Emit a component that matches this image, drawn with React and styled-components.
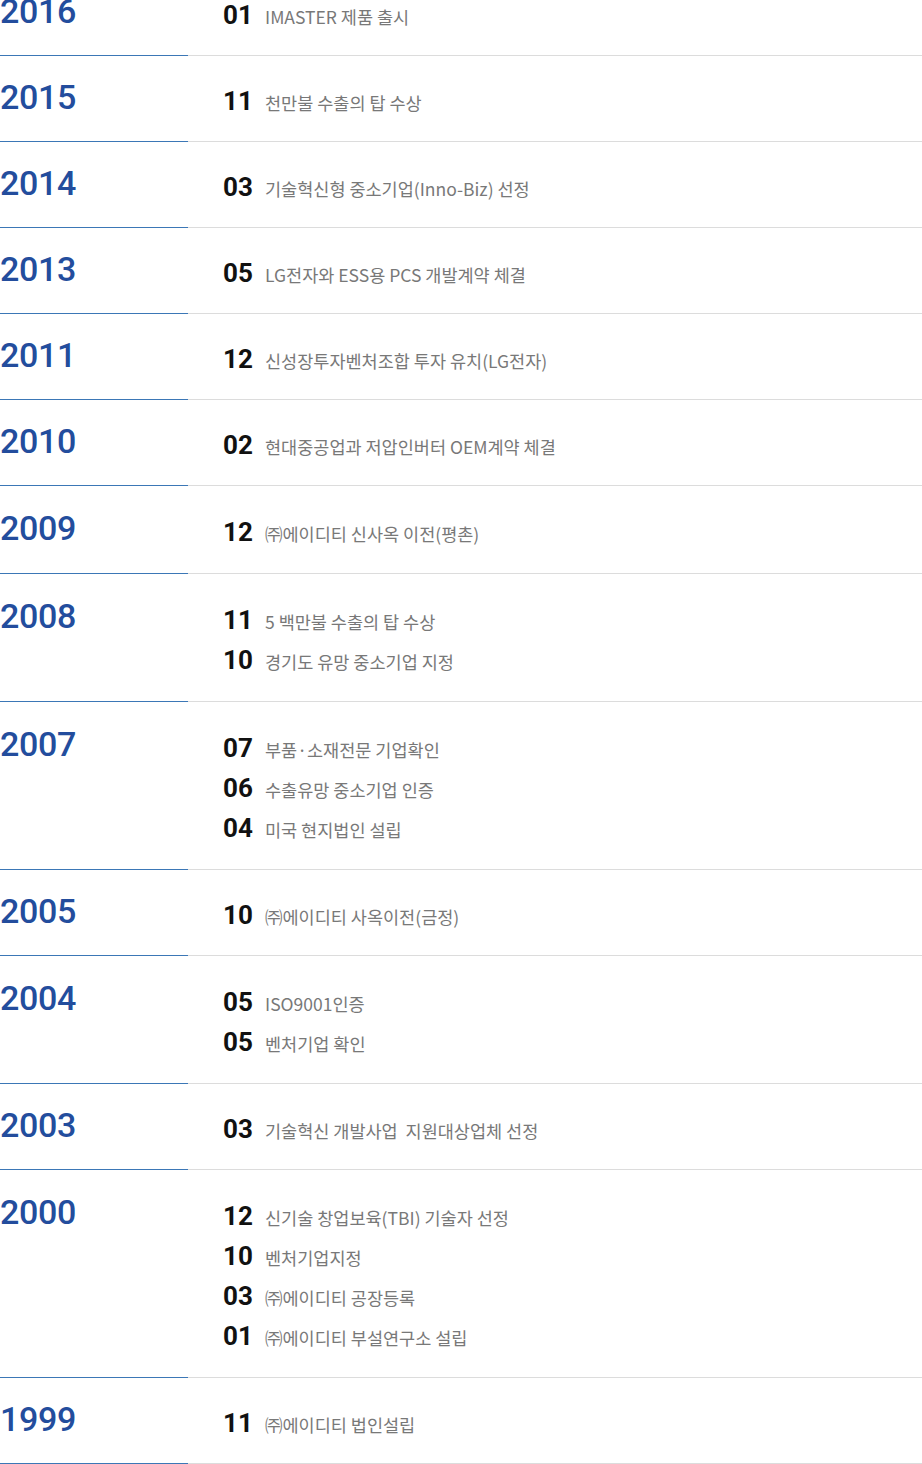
import React from 'react';
import styled, { createGlobalStyle } from 'styled-components';

const GlobalStyle = createGlobalStyle`
  html, body {
    margin: 0;
    padding: 0;
    background: #fff;
  }
  body {
    font-family: 'Noto Sans CJK KR', 'Noto Sans', sans-serif;
    overflow: hidden;
  }
`;

const Wrapper = styled.ul`
  list-style: none;
  margin: -30px 0 0;
  padding: 0;
  width: 922px;
`;

const Row = styled.li`
  display: grid;
  grid-template-columns: 188px 1fr;
`;

const Year = styled.div`
  padding: ${p => (p.$tall ? '26px 0 21px' : '25px 0 20px')};
  border-bottom: 1px solid #3b77b6;
  font-family: Roboto, 'Liberation Sans', sans-serif;
  font-size: 34px;
  font-weight: 500;
  line-height: 32px;
  color: #234d9d;
  letter-spacing: -0.3px;
`;

const Events = styled.ul`
  list-style: none;
  margin: 0;
  padding: ${p => (p.$tall ? '26px 0 21px 35px' : '25px 0 20px 35px')};
  border-bottom: 1px solid #dcdcdc;
`;

const Event = styled.li`
  display: flex;
  align-items: baseline;
  height: 40px;
  line-height: 40px;
`;

const Month = styled.strong`
  flex: none;
  width: 42px;
  font-family: Roboto, 'Liberation Sans', sans-serif;
  font-size: 26px;
  font-weight: 700;
  color: #111;
`;

const Desc = styled.span`
  font-family: 'Noto Sans CJK KR', 'Noto Sans', sans-serif;
  font-size: 17.5px;
  color: #787878;
  white-space: pre;
`;

const HISTORY = [
  { year: '2016', events: [['01', 'IMASTER 제품 출시']] },
  { year: '2015', events: [['11', '천만불 수출의 탑 수상']] },
  { year: '2014', events: [['03', '기술혁신형 중소기업(Inno-Biz) 선정']] },
  { year: '2013', events: [['05', 'LG전자와 ESS용 PCS 개발계약 체결']] },
  { year: '2011', events: [['12', '신성장투자벤처조합 투자 유치(LG전자)']] },
  { year: '2010', events: [['02', '현대중공업과 저압인버터 OEM계약 체결']] },
  { year: '2009', tall: true, events: [['12', '㈜에이디티 신사옥 이전(평촌)']] },
  {
    year: '2008',
    events: [
      ['11', '5 백만불 수출의 탑 수상'],
      ['10', '경기도 유망 중소기업 지정'],
    ],
  },
  {
    year: '2007',
    events: [
      ['07', '부품·소재전문 기업확인'],
      ['06', '수출유망 중소기업 인증'],
      ['04', '미국 현지법인 설립'],
    ],
  },
  { year: '2005', events: [['10', '㈜에이디티 사옥이전(금정)']] },
  {
    year: '2004',
    events: [
      ['05', 'ISO9001인증'],
      ['05', '벤처기업 확인'],
    ],
  },
  { year: '2003', events: [['03', '기술혁신 개발사업  지원대상업체 선정']] },
  {
    year: '2000',
    events: [
      ['12', '신기술 창업보육(TBI) 기술자 선정'],
      ['10', '벤처기업지정'],
      ['03', '㈜에이디티 공장등록'],
      ['01', '㈜에이디티 부설연구소 설립'],
    ],
  },
  { year: '1999', events: [['11', '㈜에이디티 법인설립']] },
];

const App = () => (
  <>
    <GlobalStyle />
    <Wrapper>
      {HISTORY.map(({ year, events, tall }) => {
        const isTall = tall || events.length > 1;
        return (
          <Row key={year}>
            <Year $tall={isTall}>{year}</Year>
            <Events $tall={isTall}>
              {events.map(([month, text], i) => (
                <Event key={i}>
                  <Month>{month}</Month>
                  <Desc>{text}</Desc>
                </Event>
              ))}
            </Events>
          </Row>
        );
      })}
    </Wrapper>
  </>
);

export default App;
